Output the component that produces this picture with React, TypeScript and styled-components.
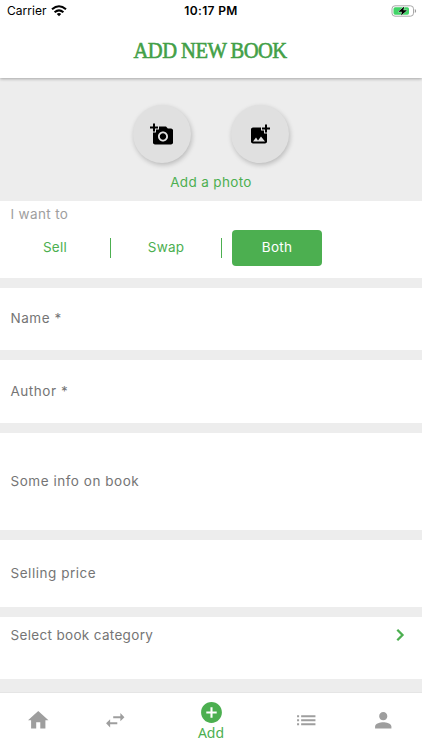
import React from "react";
import styled, { createGlobalStyle } from "styled-components";
import {
  MdAddAPhoto,
  MdAddCircle,
  MdAddPhotoAlternate,
  MdHome,
  MdList,
  MdPerson,
  MdSwapHoriz,
} from "react-icons/md";

const GREEN = "#4caf50";

const GlobalStyle = createGlobalStyle`
  * { box-sizing: border-box; }
  body { margin: 0; background: #ededed; font-family: Inter, sans-serif; }
  button { font: inherit; letter-spacing: inherit; border: 0; padding: 0; background: none; }
  svg { display: block; }
`;

const Screen = styled.div`
  width: 422px;
  height: 750px;
  display: flex;
  flex-direction: column;
  overflow: hidden;
  background: #ededed;
  font-size: 13.5px;
  letter-spacing: 0.35px;
`;

const Header = styled.header`
  flex: none;
  height: 78px;
  background: #fff;
  box-shadow: 0 1px 3px rgba(0, 0, 0, 0.3);
`;

const StatusBar = styled.div`
  height: 22px;
  display: grid;
  grid-template-columns: 1fr auto 1fr;
  align-items: center;
  padding: 0 5px 0 7px;
  color: #000;
  font-size: 12px;
  line-height: 22px;
  letter-spacing: 0.05px;
`;

const Carrier = styled.div`
  display: flex;
  align-items: center;
  gap: 4px;
`;

const Clock = styled.span`
  padding-right: 2px;
  font-weight: 600;
  letter-spacing: 0.35px;
`;

const BatterySlot = styled.div`
  justify-self: end;
`;

const Title = styled.h1`
  margin: 0;
  padding-right: 2px;
  height: 56px;
  line-height: 58px;
  text-align: center;
  color: #43a047;
  font-family: "Liberation Serif", serif;
  font-size: 22.5px;
  font-weight: 400;
  letter-spacing: -0.6px;
  -webkit-text-stroke: 0.6px #43a047;
  transform: scaleX(0.915);
`;

const PhotoSection = styled.section`
  flex: none;
  height: 123px;
  padding-top: 27px;
`;

const PhotoButtons = styled.div`
  display: flex;
  justify-content: center;
  gap: 40px;
`;

const PhotoButton = styled.button`
  width: 58px;
  height: 58px;
  border-radius: 50%;
  display: grid;
  place-items: center;
  background: #e0e0e0;
  color: #000;
  font-size: 24px;
  box-shadow: 1px 2px 5px rgba(0, 0, 0, 0.22);

  svg { transform: translateY(0.5px); }
`;

const PhotoCaption = styled.div`
  margin-top: 8px;
  line-height: 22px;
  text-align: center;
  color: ${GREEN};
`;

const Form = styled.main`
  flex: none;
  display: flex;
  flex-direction: column;
  gap: 10px;
`;

const IntentCard = styled.section`
  height: 76.5px;
  padding-top: 3px;
  background: #fff;
`;

const IntentLabel = styled.div`
  padding-left: 10.5px;
  line-height: 21px;
  color: #9e9e9e;
`;

const Options = styled.div`
  display: flex;
  align-items: center;
  margin-top: 4.5px;
  padding-left: 10px;
`;

const Option = styled.button<{ $selected?: boolean }>`
  width: 90px;
  height: 36.5px;
  padding-bottom: 1.5px;
  border-radius: 4px;
  letter-spacing: 0.25px;
  color: ${(p) => (p.$selected ? "#fff" : GREEN)};
  background: ${(p) => (p.$selected ? GREEN : "transparent")};
`;

const Divider = styled.span`
  width: 1px;
  height: 20px;
  margin: 0 10px;
  background: ${GREEN};
`;

const Field = styled.div<{ $height: number }>`
  height: ${(p) => p.$height}px;
  padding: 0 10.5px 1.5px;
  display: flex;
  align-items: center;
  background: #fff;
  color: #757575;
  line-height: 22px;
  letter-spacing: 0.53px;
`;

const CategoryField = styled(Field)`
  align-items: flex-start;
  justify-content: space-between;
  padding: 6.5px 17.5px 0 10.5px;
  letter-spacing: 0.33px;
`;

const NavBar = styled.nav`
  flex: none;
  height: 57px;
  margin-top: auto;
  display: grid;
  grid-template-columns: 77px 77px 1fr 77px 77px;
  background: #fff;
  box-shadow: 0 0 1px rgba(0, 0, 0, 0.2);
`;

const NavItem = styled.button<{ $active?: boolean }>`
  display: flex;
  flex-direction: column;
  align-items: center;
  justify-content: ${(p) => (p.$active ? "flex-start" : "center")};
  padding: ${(p) => (p.$active ? "7px 0 0" : "0 0 3px")};
  color: ${(p) => (p.$active ? GREEN : "#9e9e9e")};
  line-height: 17px;
  letter-spacing: 0;

  svg { font-size: ${(p) => (p.$active ? 25 : 24.5)}px; }
`;

const NavLabel = styled.span`
  margin-top: -1px;
  font-family: "Noto Sans", sans-serif;
  font-size: 14px;
`;

const WifiIcon = () => (
  <svg width="16" height="12" viewBox="0 0 16 12" fill="none" stroke="#000" strokeWidth="2.1">
    <path d="M1 4.2Q8-1.7 15 4.2" />
    <path d="M3.6 7.2Q8 3.4 12.4 7.2" />
    <path d="M5.8 9Q8 7.2 10.2 9L8 11.2Z" fill="#000" stroke="none" />
  </svg>
);

const BatteryIcon = () => (
  <svg width="26" height="12" viewBox="0 0 26 12">
    <rect x="1" y=".8" width="21.5" height="10.4" rx="3" fill="#fff" stroke="#a8a8a8" />
    <rect x="2.5" y="2.3" width="15.5" height="7.4" rx="1.6" fill="#41d467" />
    <path d="M23.8 4v4q1.3-.6 1.3-2t-1.3-2Z" fill="#999" />
    <path d="M13.2 1.4 7.2 6.8h3.7l-.8 3.8 6-5.4h-3.7Z" fill="#000" stroke="#fff" strokeWidth=".7" paintOrder="stroke" />
  </svg>
);

const ChevronIcon = () => (
  <svg width="10" height="22" viewBox="0 0 10 22" fill="none" stroke={GREEN} strokeWidth="2.3">
    <path d="M2.3 5.8 7.5 11l-5.2 5.2" />
  </svg>
);

export default function App() {
  return (
    <>
      <GlobalStyle />
      <Screen>
        <Header>
          <StatusBar>
            <Carrier>
              Carrier
              <WifiIcon />
            </Carrier>
            <Clock>10:17 PM</Clock>
            <BatterySlot>
              <BatteryIcon />
            </BatterySlot>
          </StatusBar>
          <Title>ADD NEW BOOK</Title>
        </Header>

        <PhotoSection>
          <PhotoButtons>
            <PhotoButton aria-label="Take a photo">
              <MdAddAPhoto />
            </PhotoButton>
            <PhotoButton aria-label="Choose a photo">
              <MdAddPhotoAlternate />
            </PhotoButton>
          </PhotoButtons>
          <PhotoCaption>Add a photo</PhotoCaption>
        </PhotoSection>

        <Form>
          <IntentCard>
            <IntentLabel>I want to</IntentLabel>
            <Options>
              <Option>Sell</Option>
              <Divider />
              <Option>Swap</Option>
              <Divider />
              <Option $selected>Both</Option>
            </Options>
          </IntentCard>
          <Field $height={62.5}>Name *</Field>
          <Field $height={63}>Author *</Field>
          <Field $height={97}>Some info on book</Field>
          <Field $height={67}>Selling price</Field>
          <CategoryField $height={61.5}>
            Select book category
            <ChevronIcon />
          </CategoryField>
        </Form>

        <NavBar>
          <NavItem aria-label="Home">
            <MdHome />
          </NavItem>
          <NavItem aria-label="Swaps">
            <MdSwapHoriz />
          </NavItem>
          <NavItem $active>
            <MdAddCircle />
            <NavLabel>Add</NavLabel>
          </NavItem>
          <NavItem aria-label="List">
            <MdList />
          </NavItem>
          <NavItem aria-label="Profile">
            <MdPerson />
          </NavItem>
        </NavBar>
      </Screen>
    </>
  );
}
